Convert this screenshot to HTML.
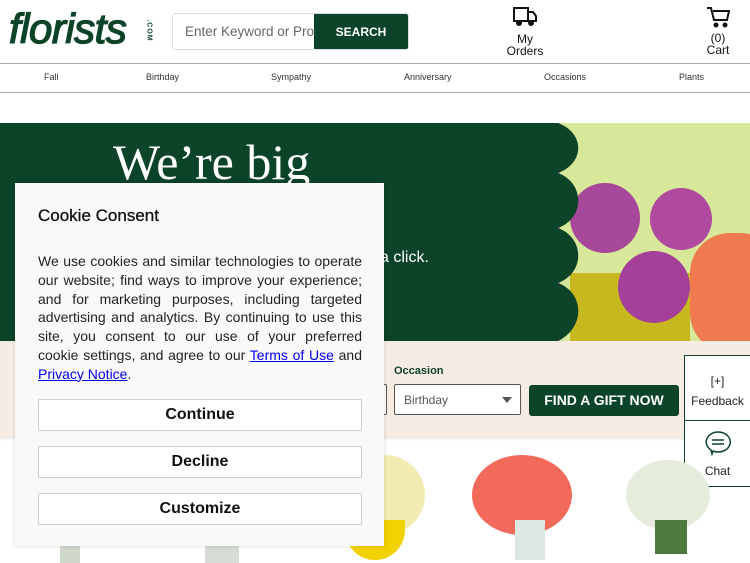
<!DOCTYPE html>
<html><head><meta charset="utf-8"><style>
*{box-sizing:border-box;margin:0;padding:0}
body{width:750px;height:563px;overflow:hidden;background:#fff;font-family:"Liberation Sans",sans-serif;position:relative}
.abs{position:absolute}
.logo{left:9px;top:5px;font-family:"Liberation Sans",sans-serif;font-style:italic;font-size:42px;color:#0c4429;letter-spacing:-0.5px;-webkit-text-stroke:1.3px #0c4429}
.com{left:138px;top:27px;font-size:7px;color:#0c4429;transform:rotate(90deg);font-weight:bold;letter-spacing:1px}
.search{left:172px;top:13px;width:237px;height:37px;border:1px solid #ddd;border-radius:3px;overflow:hidden}
.search span{position:absolute;left:12px;top:10px;font-size:13.5px;color:#666;white-space:nowrap}
.search b{position:absolute;right:0;top:0;width:94px;height:37px;background:#0c4429;color:#fff;font-size:12px;text-align:center;line-height:37px}
.nav{left:0;top:63px;width:750px;height:30px;border-top:1px solid #aaa;border-bottom:1px solid #aaa}
.nav span{position:absolute;top:8px;font-size:9px;color:#333}
.hero{left:0;top:123px;width:750px;height:218px;background:#e8c;overflow:hidden}
.panel{left:15px;top:183px;width:369px;height:363px;background:#f9f9f9;box-shadow:0 0 4px rgba(0,0,0,.15)}
.panel h2{position:absolute;left:23px;top:23px;font-size:17px;font-weight:normal;color:#111;-webkit-text-stroke:0.3px #111}
.panel .p{position:absolute;left:23px;top:69px;width:324px;font-size:14px;line-height:18.8px;color:#222}
.panel .p div{text-align:justify;text-align-last:justify;white-space:nowrap}
.panel .p div.l{text-align-last:left}
.panel a{color:#00e}
.btn{position:absolute;left:23px;width:324px;height:32px;border:1px solid #ccc;border-radius:2px;background:#fff;text-align:center;line-height:30px;font-size:16px;font-weight:bold;color:#111}
.side{left:684px;width:66px;background:#fff;border:1px solid #0c4429;border-right:none;text-align:center;font-size:12px;color:#222}
</style></head><body>
<div class="abs logo">florists</div>
<div class="abs com">.COM</div>
<div class="abs search"><span>Enter Keyword or Proc</span><b>SEARCH</b></div>
<svg class="abs" style="left:512px;top:6px" width="26" height="22" viewBox="0 0 26 22" fill="none" stroke="#111" stroke-width="2"><rect x="2" y="2" width="14" height="13"/><path d="M16 6h5l3 4v5h-8"/><circle cx="7" cy="17" r="2" fill="#111"/><circle cx="19" cy="17" r="2" fill="#111"/></svg>
<div class="abs" style="left:500px;top:34px;width:50px;text-align:center;font-size:12px;line-height:11.5px;color:#111">My<br>Orders</div>
<svg class="abs" style="left:706px;top:6px" width="24" height="22" viewBox="0 0 24 22" fill="none" stroke="#111" stroke-width="2"><path d="M1 2h4l3 12h13l2-9H7"/><circle cx="10" cy="19" r="1.5" fill="#111"/><circle cx="19" cy="19" r="1.5" fill="#111"/></svg>
<div class="abs" style="left:700px;top:32px;width:36px;text-align:center;font-size:12px;line-height:12px;color:#111">(0)<br>Cart</div>
<div class="abs nav"><span style="left:44px">Fall</span><span style="left:146px">Birthday</span><span style="left:271px">Sympathy</span><span style="left:404px">Anniversary</span><span style="left:544px">Occasions</span><span style="left:679px">Plants</span></div>
<div class="abs hero">
 <div class="abs" style="left:560px;top:0;width:190px;height:218px;background:#d8e89a"></div>
 <div class="abs" style="left:690px;top:110px;width:90px;height:120px;background:#f07a50;border-radius:40px"></div>
 <div class="abs" style="left:570px;top:150px;width:120px;height:68px;background:#c8b820"></div>
 <div class="abs" style="left:570px;top:60px;width:70px;height:70px;border-radius:50%;background:#a8489a"></div>
 <div class="abs" style="left:650px;top:65px;width:62px;height:62px;border-radius:50%;background:#b04a9e"></div>
 <div class="abs" style="left:618px;top:128px;width:72px;height:72px;border-radius:50%;background:#a4409a"></div>
 <svg class="abs" style="left:0;top:0" width="600" height="218"><path fill="#0c4429" d="M0 0H558C585 10 585 40 558 50C585 60 585 95 558 105C585 115 585 150 558 160C585 170 585 205 558 218H0Z"/></svg>
 <div class="abs" style="left:113px;top:10px;font-family:'Liberation Serif',serif;font-size:50px;color:#fff">We’re big</div>
 <div class="abs" style="left:340px;top:62px;font-family:'Liberation Serif',serif;font-size:50px;color:#fff">s</div>
 <div class="abs" style="left:380px;top:126px;font-size:16px;color:#fff">a click.</div>
</div>
<div class="abs" style="left:0;top:341px;width:750px;height:96px;background:#f7ece4;box-shadow:0 2px 3px rgba(0,0,0,.1)"></div>
<div class="abs" style="left:394px;top:365px;font-size:11px;font-weight:bold;color:#0c4429">Occasion</div>
<div class="abs" style="left:370px;top:384px;width:17px;height:31px;border:1px solid #555;border-left:none;border-radius:2px;background:#fff"></div>
<div class="abs" style="left:394px;top:384px;width:127px;height:31px;border:1px solid #555;border-radius:2px;background:#fff;font-size:12px;color:#555;padding:8px 9px">Birthday<span style="position:absolute;right:8px;top:12px;border:5px solid transparent;border-top:6px solid #555"></span></div>
<div class="abs" style="left:529px;top:385px;width:150px;height:31px;background:#0c4429;border-radius:3px;color:#fff;font-size:14px;font-weight:bold;text-align:center;line-height:31px">FIND A GIFT NOW</div>
<div class="abs side" style="top:355px;height:66px;padding-top:15px;font-size:12px;line-height:20px">[+]<br>Feedback</div>
<div class="abs side" style="top:421px;height:66px;padding-top:8px;border-top:none"><svg width="30" height="28" viewBox="0 0 30 28" fill="none" stroke="#0c4429" stroke-width="1.5"><path d="M15 3a12 10 0 1 1-5 19l-1 3-1-4A12 10 0 0 1 15 3z"/><path d="M9 11h12M9 15h12"/></svg><div style="margin-top:4px">Chat</div></div>
<div class="abs" style="left:40px;top:540px;width:60px;height:23px"><div style="margin:0 auto;width:20px;height:23px;background:#cfd6cc"></div></div>
<div class="abs" style="left:205px;top:540px;width:34px;height:23px;background:#d6dbd3"></div>
<div class="abs" style="left:345px;top:455px;width:80px;height:80px;border-radius:50%;background:#f3ecb0"></div>
<div class="abs" style="left:345px;top:520px;width:60px;height:40px;border-radius:0 0 30px 30px;background:#f2d200"></div>
<div class="abs" style="left:472px;top:455px;width:100px;height:80px;border-radius:50%;background:#f26a5a"></div>
<div class="abs" style="left:515px;top:520px;width:30px;height:40px;background:#dfe7e2"></div>
<div class="abs" style="left:626px;top:460px;width:84px;height:70px;border-radius:50%;background:#e6ecdc"></div>
<div class="abs" style="left:655px;top:520px;width:32px;height:34px;background:#4f7a3e"></div>
<div class="abs panel">
 <h2>Cookie Consent</h2>
 <div class="p">
  <div>We use cookies and similar technologies to operate</div>
  <div>our website; find ways to improve your experience;</div>
  <div>and for marketing purposes, including targeted</div>
  <div>advertising and analytics. By continuing to use this</div>
  <div>site, you consent to our use of your preferred</div>
  <div>cookie settings, and agree to our <a href="#">Terms of Use</a> and</div>
  <div class="l"><a href="#">Privacy Notice</a>.</div>
 </div>
 <div class="btn" style="top:216px">Continue</div>
 <div class="btn" style="top:263px">Decline</div>
 <div class="btn" style="top:310px">Customize</div>
</div>
</body></html>
